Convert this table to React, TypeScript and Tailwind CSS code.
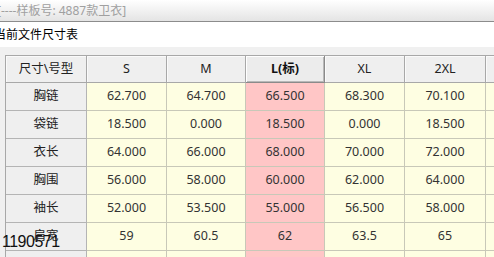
import React from "react";

const cols = ["S", "M", "L(标)", "XL", "2XL", ""];
const widths = ["w-[81px]", "w-[80px]", "w-[79px]", "w-[79px]", "w-[80px]", "w-[81px]", "w-[80px]"];

const rows: { name: string; values: string[] }[] = [
   { name: "胸链", values: ["62.700", "64.700", "66.500", "68.300", "70.100", ""] },
   { name: "袋链", values: ["18.500", "0.000", "18.500", "0.000", "18.500", ""] },
   { name: "衣长", values: ["64.000", "66.000", "68.000", "70.000", "72.000", ""] },
   { name: "胸围", values: ["56.000", "58.000", "60.000", "62.000", "64.000", ""] },
   { name: "袖长", values: ["52.000", "53.500", "55.000", "56.500", "58.000", ""] },
   { name: "肩宽", values: ["59", "60.5", "62", "63.5", "65", ""] },
   { name: "", values: ["", "", "", "", "", ""] },
];

const font = { fontFamily: '"Noto Sans", "Noto Sans CJK SC", sans-serif' };

export default function App() {
   return (
      <div className="relative w-[494px] h-[257px] overflow-hidden bg-[#f0f0f0]" style={font}>
         {/* title bar */}
         <div className="h-[22px] bg-gradient-to-b from-white to-[#e4e4e4] border-b border-[#8c8c8c] flex items-center">
            <span className="text-[12px] text-[#a0a0a0] -ml-[3px] whitespace-nowrap leading-none">[----样板号: 4887款卫衣]</span>
         </div>

         {/* caption */}
         <div className="h-[25px] bg-white flex items-center">
            <span className="text-[12px] text-black -ml-[6px] whitespace-nowrap leading-none">当前文件尺寸表</span>
         </div>

         {/* size table */}
         <div className="pt-[8px] pl-[5px]">
            <div className="flex w-max border-l border-t border-[#a8a8a8]">
               <div className={`${widths[0]} h-[27px] shrink-0 bg-[#efefef] border-r border-b border-[#a8a8a8] shadow-[inset_1px_1px_0_#fafafa] flex items-center justify-center text-[12.5px] text-[#222]`}>
                  尺寸\号型
               </div>
               {cols.map((c, i) => (
                  <div
                     key={i}
                     className={`${widths[i + 1]} h-[27px] shrink-0 border-r border-b flex items-center justify-center text-[12.5px] ${
                        i === 2
                           ? "bg-[#ececec] border-[#8a8a8a] shadow-[inset_1px_1px_0_#ffffff,inset_-1px_-1px_0_#b8b8b8] font-bold text-[#111]"
                           : "bg-[#efefef] border-[#a8a8a8] shadow-[inset_1px_1px_0_#fafafa] text-[#222]"
                     }`}
                  >
                     {c}
                  </div>
               ))}
            </div>
            {rows.map((r, ri) => (
               <div key={ri} className="flex w-max border-l border-[#a8a8a8]">
                  <div className={`${widths[0]} h-[28px] shrink-0 bg-[#efefef] border-r border-b border-[#b4b4b4] flex items-center justify-center text-[12.5px] text-[#222]`}>
                     {r.name}
                  </div>
                  {r.values.map((v, i) => (
                     <div
                        key={i}
                        className={`${widths[i + 1]} h-[28px] shrink-0 border-r border-b border-[#c8c8b8] flex items-center justify-center text-[12.5px] text-[#333] ${
                           i === 2 ? "bg-[#ffc6c6]" : "bg-[#fefee2]"
                        }`}
                     >
                        {v}
                     </div>
                  ))}
               </div>
            ))}
         </div>

         {/* overlaid id */}
         <span
            className="absolute left-[2px] top-[234px] text-[16px] leading-none tracking-[-0.5px] text-[#111]"
            style={{ fontFamily: '"Liberation Sans", Arial, sans-serif' }}
         >
            1190571
         </span>
      </div>
   );
}
